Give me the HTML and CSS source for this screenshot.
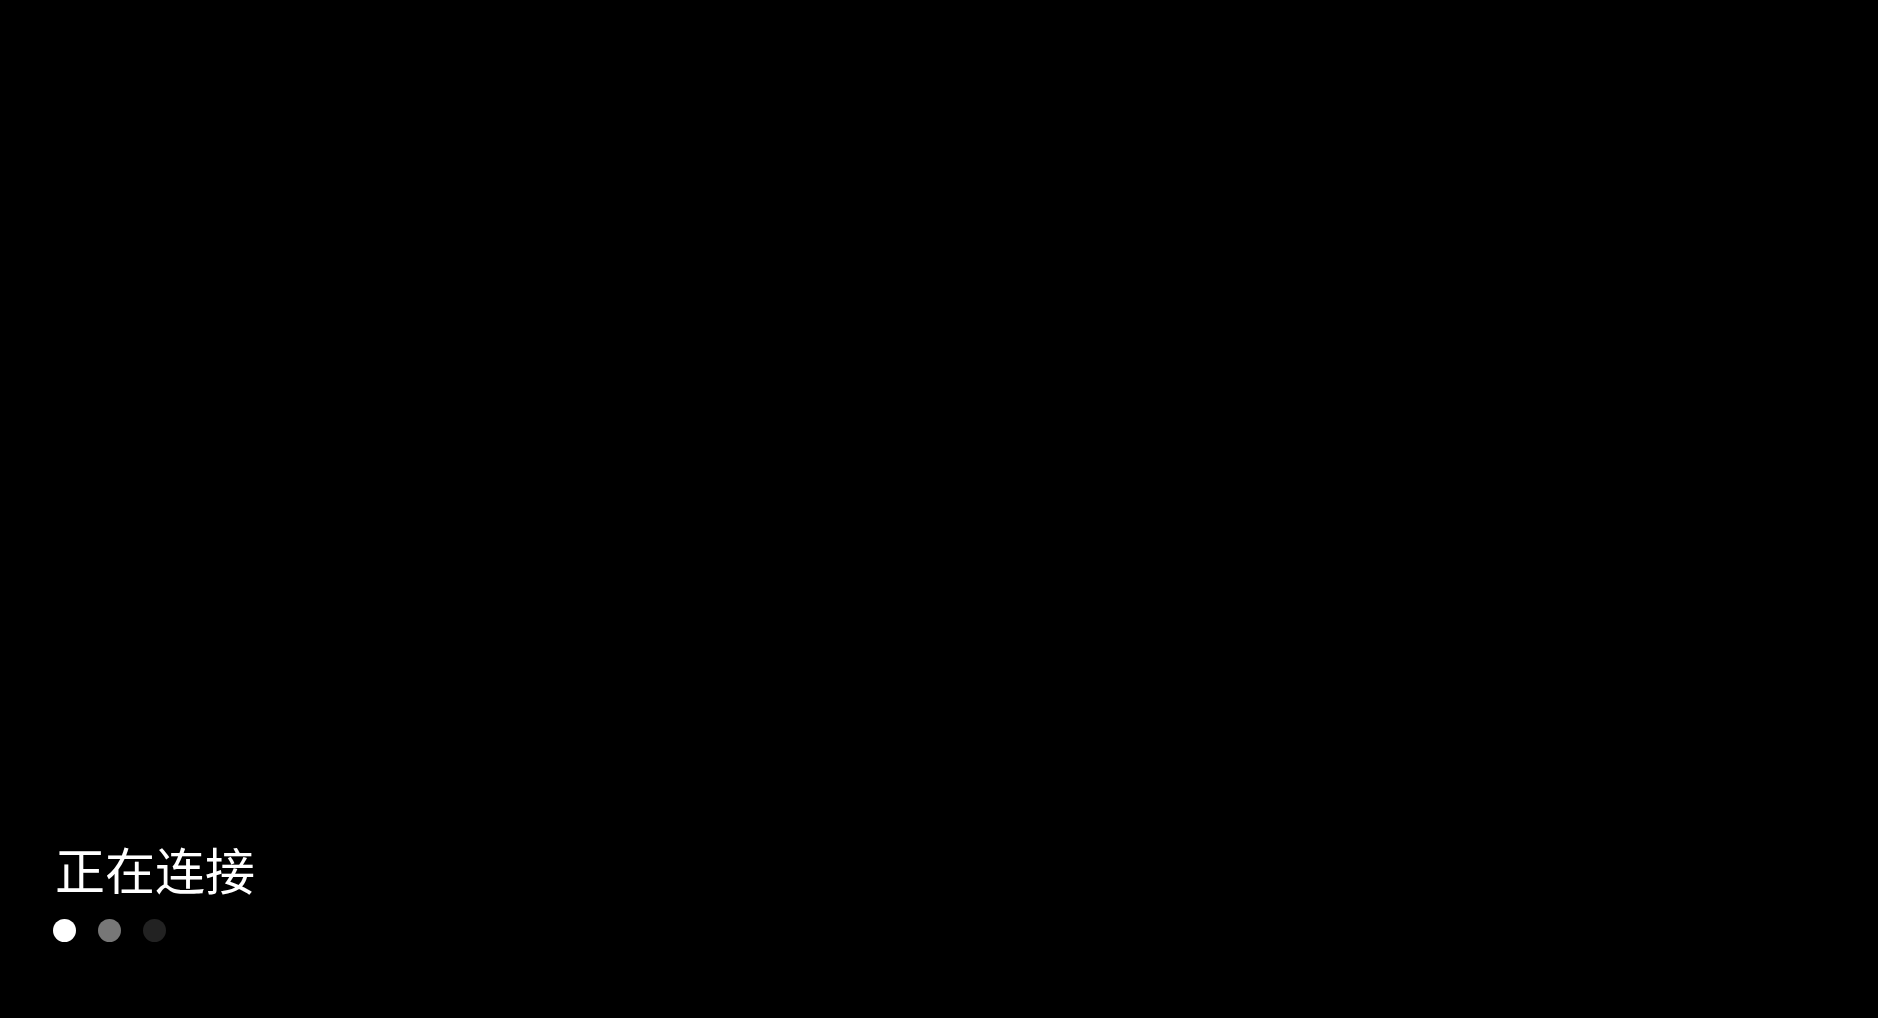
FILE: index.html
```html
<!DOCTYPE html>
<html lang="zh-CN">
<head>
<meta charset="utf-8">
<title>正在连接</title>
<link rel="stylesheet" href="styles.css">
</head>
<body>
<main class="screen">
  <div class="status">
    <div class="label">正在连接</div>
    <div class="dots">
      <span class="dot dot-1"></span>
      <span class="dot dot-2"></span>
      <span class="dot dot-3"></span>
    </div>
  </div>
</main>
</body>
</html>
```
FILE: styles.css
```css
html, body {
  margin: 0;
  padding: 0;
  background: #000;
  height: 100%;
}
.screen {
  width: 1878px;
  height: 1018px;
  display: flex;
  flex-direction: column;
  justify-content: flex-end;
  box-sizing: border-box;
  padding: 0 0 76px 53px;
}
.status {
  display: flex;
  flex-direction: column;
  gap: 23px;
}
.label {
  font-family: "Noto Sans CJK SC", "Noto Sans", sans-serif;
  font-size: 50px;
  line-height: 56px;
  color: #fff;
  padding-left: 2px;
}
.dots {
  display: flex;
  gap: 22px;
}
.dot {
  width: 23px;
  height: 23px;
  border-radius: 50%;
  display: block;
}
.dot-1 { background: #fff; }
.dot-2 { background: #777; }
.dot-3 { background: #222; }
```
